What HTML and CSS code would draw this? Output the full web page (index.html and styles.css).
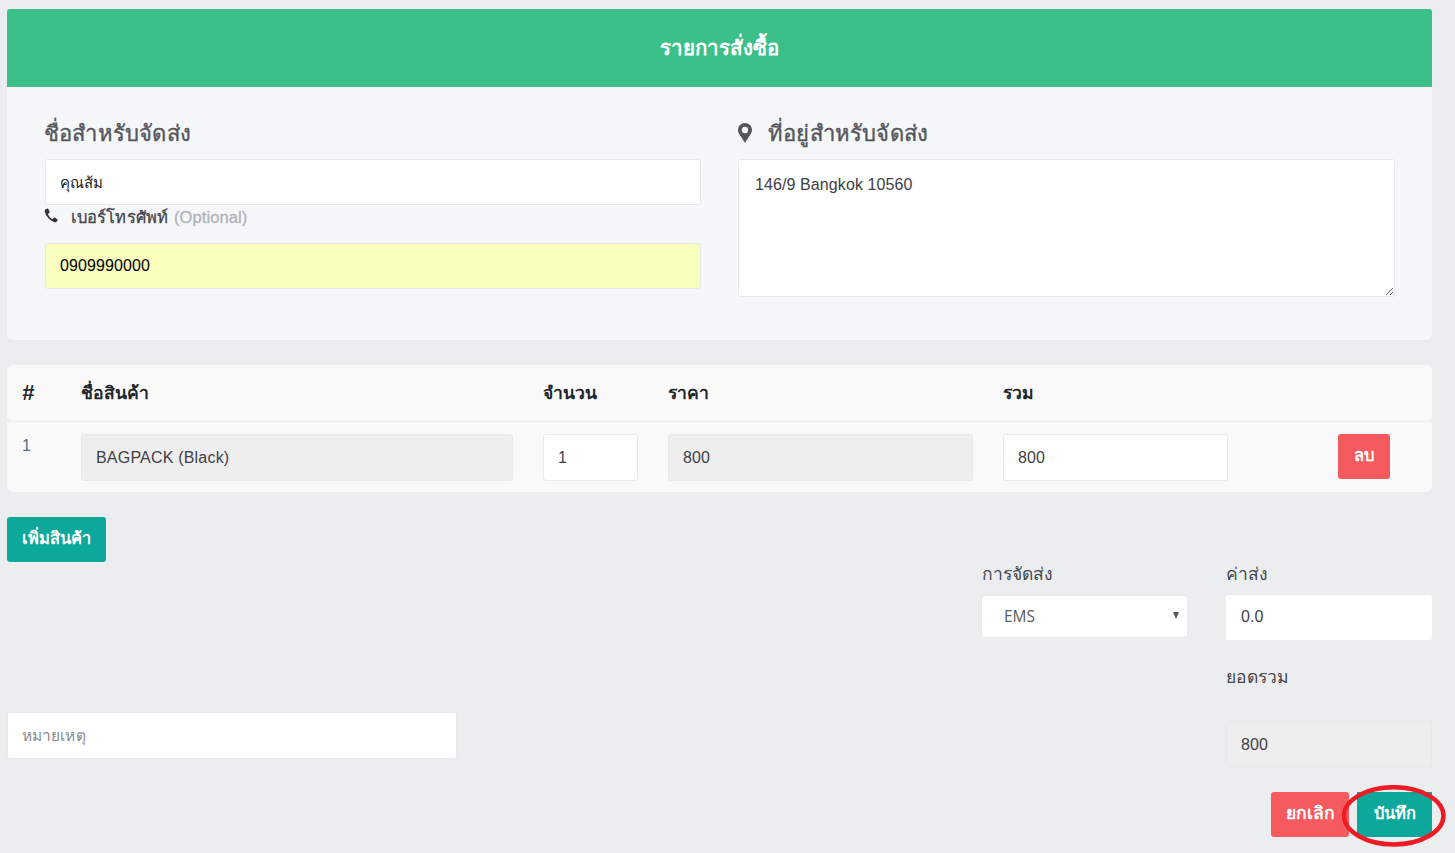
FILE: index.html
```html
<!DOCTYPE html>
<html lang="th">
<head>
    <meta charset="UTF-8">
    <meta name="viewport" content="width=device-width, initial-scale=1.0">
    <title>รายการสั่งซื้อ</title>
    <link rel="stylesheet" href="styles.css">
</head>
<body>
    <div class="header">รายการสั่งซื้อ</div>

    <div class="ship-card">
        <div class="ship-col ship-col-left">
            <h3 class="ship-title">ชื่อสำหรับจัดส่ง</h3>
            <input class="field name-input" type="text" value="คุณส้ม">
            <div class="phone-label">
                <svg class="phone-icon" viewBox="0 0 16 16"><path d="M3.6.6 1.4 1.5C.7 1.9.6 3 1 4.3c1.3 4.6 5 8.900 9.600 10.700 1.300.5 2.400.3 2.800-.3l1.100-1.700c.2-.4.100-.8-.3-1l-2.700-1.800c-.4-.2-.8-.2-1.100.2l-.9 1.100c-.2.200-.5.300-.8.100C6.900 11.300 5.200 9 4.300 6.700c-.1-.3 0-.6.200-.8l1.100-.7c.4-.3.500-.7.400-1.100L4.600 1C4.400.6 4 .4 3.600.6Z"/></svg>
                <span>เบอร์โทรศัพท์</span>
                <span class="optional">(Optional)</span>
            </div>
            <input class="field field-yellow" type="text" value="0909990000">
        </div>
        <div class="ship-col">
            <h3 class="ship-title">
                <svg class="pin-icon" viewBox="0 0 14 20"><path fill-rule="evenodd" d="M7 0C3.100 0 0 3.100 0 6.800c0 1.700.5 2.700 1.300 4.200L7 20l5.700-9c.8-1.500 1.300-2.500 1.300-4.200C14 3.100 10.900 0 7 0Zm0 3.800a3.200 3.200 0 1 1 0 6.400 3.200 3.200 0 0 1 0-6.400Z"/></svg>
                ที่อยู่สำหรับจัดส่ง
            </h3>
            <textarea class="field address">146/9 Bangkok 10560</textarea>
        </div>
    </div>

    <table class="items">
        <thead>
            <tr>
                <th class="col-no">#</th>
                <th class="col-name">ชื่อสินค้า</th>
                <th class="col-qty">จำนวน</th>
                <th class="col-price">ราคา</th>
                <th class="col-total">รวม</th>
                <th class="col-del"></th>
            </tr>
        </thead>
        <tbody>
            <tr>
                <td class="item-no">1</td>
                <td><input class="field cell cell-name" type="text" value="BAGPACK (Black)" readonly></td>
                <td><input class="field cell white" type="text" value="1"></td>
                <td><input class="field cell" type="text" value="800" readonly></td>
                <td><input class="field cell white" type="text" value="800"></td>
                <td><button class="btn btn-red btn-del">ลบ</button></td>
            </tr>
        </tbody>
    </table>

    <button class="btn btn-teal btn-add">เพิ่มสินค้า</button>

    <div class="summary">
        <div class="note-col">
            <input class="field note" type="text" placeholder="หมายเหตุ">
        </div>
        <div class="ship-method">
            <label class="sum-label">การจัดส่ง</label>
            <div class="select-box">EMS<span class="caret"></span></div>
        </div>
        <div class="totals">
            <label class="sum-label">ค่าส่ง</label>
            <input class="field fee" type="text" value="0.0">
            <label class="sum-label total-label">ยอดรวม</label>
            <input class="field fee total" type="text" value="800" readonly>
        </div>
    </div>

    <div class="actions">
        <button class="btn btn-red btn-cancel">ยกเลิก</button>
        <div class="save-wrap">
            <button class="btn btn-teal btn-save">บันทึก</button>
            <svg class="circle-mark" viewBox="0 0 106 64"><ellipse cx="51.700" cy="30.800" rx="49.750" ry="28.600"/></svg>
        </div>
    </div>
</body>
</html>
```

FILE: styles.css
```css
html, body {
    height: 853px;
    overflow: hidden;
}
body {
    font-family: "Liberation Sans", "Noto Sans", sans-serif;
    margin: 0;
    padding: 9px 23px 0 7px;
    background-color: #ecedef;
    color: #3f4047;
}
.header {
    height: 78px;
    line-height: 78px;
    text-align: center;
    font-size: 20.500px;
    font-weight: bold;
    color: #fff;
    background: #3bc08a;
    border-radius: 3px 3px 0 0;
}

/* shipping card */
.ship-card {
    display: flex;
    gap: 37px;
    height: 253px;
    padding: 30px 37px 0 38px;
    box-sizing: border-box;
    background: #f6f7f9;
    border-radius: 0 0 6px 6px;
}
.ship-col {
    flex: 1;
    min-width: 0;
}
.ship-col-left {
    flex: none;
    width: 656px;
}
.ship-title {
    display: flex;
    align-items: center;
    height: 32px;
    margin: 0 0 10px -1px;
    font-size: 22px;
    letter-spacing: 0.2px;
    font-weight: normal;
    color: #55565c;
    -webkit-text-stroke: 0.4px #55565c;
}
.pin-icon {
    width: 14px;
    height: 20px;
    margin: 0 16px 0 1px;
    fill: #55565c;
}
.field {
    display: block;
    width: 100%;
    height: 46px;
    padding: 0 14px;
    box-sizing: border-box;
    font-family: "Liberation Sans", "Noto Sans", sans-serif;
    font-size: 16px;
    letter-spacing: 0.1px;
    color: #3f4047;
    background: #fff;
    border: 1px solid #e8e9ec;
    border-radius: 3px;
    outline: none;
}
.name-input {
    padding-top: 2px;
    font-size: 15px;
    letter-spacing: 0;
    color: #222;
}
.phone-label {
    display: flex;
    align-items: center;
    gap: 6px;
    height: 24px;
    margin-bottom: 14px;
    font-size: 16.500px;
    letter-spacing: 0.1px;
    color: #44454b;
    -webkit-text-stroke: 0.3px #44454b;
}
.phone-icon {
    width: 15px;
    height: 15px;
    margin: -3px 6px 0 -1px;
    fill: #33343a;
}
.optional {
    color: #b1b2b8;
    -webkit-text-stroke: 0.3px #b1b2b8;
}
.field-yellow {
    color: #000;
    background: #faffbd;
}
.address {
    height: 138px;
    padding: 15px 16px;
    line-height: 20px;
}

/* items table */
.items {
    width: 100%;
    margin-top: 25px;
    border-collapse: separate;
    border-spacing: 0;
    table-layout: fixed;
}
.items th {
    height: 57px;
    padding: 0 0 1px 15px;
    box-sizing: border-box;
    text-align: left;
    font-size: 17.500px;
    color: #212529;
    background: #f9f9f9;
    border-bottom: 1px solid #ecedef;
}
.items th.col-no {
    font-size: 22px;
    font-style: italic;
}
.items th:first-child {
    border-radius: 6px 0 0 6px;
}
.items th:last-child {
    border-radius: 0 6px 6px 0;
}
.items td {
    height: 70px;
    padding: 12px 15px 11px;
    box-sizing: border-box;
    background: #f9f9f9;
    vertical-align: top;
}
.items td:first-child {
    border-radius: 0 0 0 6px;
}
.items td:last-child {
    border-radius: 0 0 6px 0;
}
.col-no {
    width: 59px;
}
.col-name {
    width: 462px;
}
.col-qty {
    width: 125px;
}
.col-price {
    width: 335px;
}
.col-total {
    width: 335px;
}
.items .item-no {
    padding-top: 15px;
    font-size: 16px;
    color: #5a6c85;
}
.cell {
    height: 47px;
    background: #eee;
    color: #3f4047;
}
.cell-name {
    letter-spacing: 0.2px;
}
.white {
    background: #fff;
}
.items td:nth-child(5) .cell {
    width: 225px;
}

/* buttons */
.btn {
    height: 45px;
    padding: 0 0 4px;
    font-family: "Liberation Sans", "Noto Sans", sans-serif;
    font-size: 16.500px;
    font-weight: bold;
    color: #fff;
    border: none;
    border-radius: 3px;
}
.btn-red {
    background: #f55b5e;
}
.btn-teal {
    background: #0ba89b;
}
.btn-del {
    width: 52px;
}
.btn-add {
    display: block;
    width: 99px;
    margin-top: 25px;
}
.btn-cancel {
    width: 78px;
    font-size: 17.500px;
}

/* summary */
.summary {
    display: flex;
    align-items: flex-start;
    height: 230px;
}
.note-col {
    width: 450px;
    margin-top: 150px;
    margin-right: 525px;
}
.note {
    height: 47px;
    font-size: 15.500px;
}
.note::placeholder {
    color: #8b8c90;
}
.ship-method {
    width: 205px;
    margin-right: 39px;
}
.sum-label {
    display: block;
    height: 33px;
    line-height: 24px;
    font-size: 17.500px;
    color: #45464c;
}
.select-box {
    position: relative;
    height: 41px;
    line-height: 41px;
    margin-top: 1px;
    padding-left: 22px;
    font-family: "Open Sans", sans-serif;
    font-size: 15.500px;
    color: #5a5b61;
    background: #fff;
    border-radius: 3px;
    box-shadow: 0 0 2px rgba(0, 0, 0, 0.06);
}
.caret {
    position: absolute;
    top: 16px;
    right: 8px;
    border-left: 3.500px solid transparent;
    border-right: 3.500px solid transparent;
    border-top: 7px solid #555;
}
.totals {
    width: 206px;
}
.fee {
    height: 45px;
    padding: 0 15px 2px;
    border: none;
}
.total-label {
    height: 56px;
    margin-top: 25px;
}
.total {
    height: 46px;
    padding: 1px 14px 0;
    background: #eee;
    border: 1px solid #e8e9ec;
}

.actions {
    display: flex;
    justify-content: flex-end;
    gap: 8px;
}
.save-wrap {
    position: relative;
}
.btn-save {
    display: block;
    width: 75px;
    border-radius: 0;
}
.circle-mark {
    position: absolute;
    left: -15px;
    top: -7px;
    width: 106px;
    height: 64px;
    fill: none;
    stroke: #ed1c24;
    stroke-width: 4.500;
}
```
